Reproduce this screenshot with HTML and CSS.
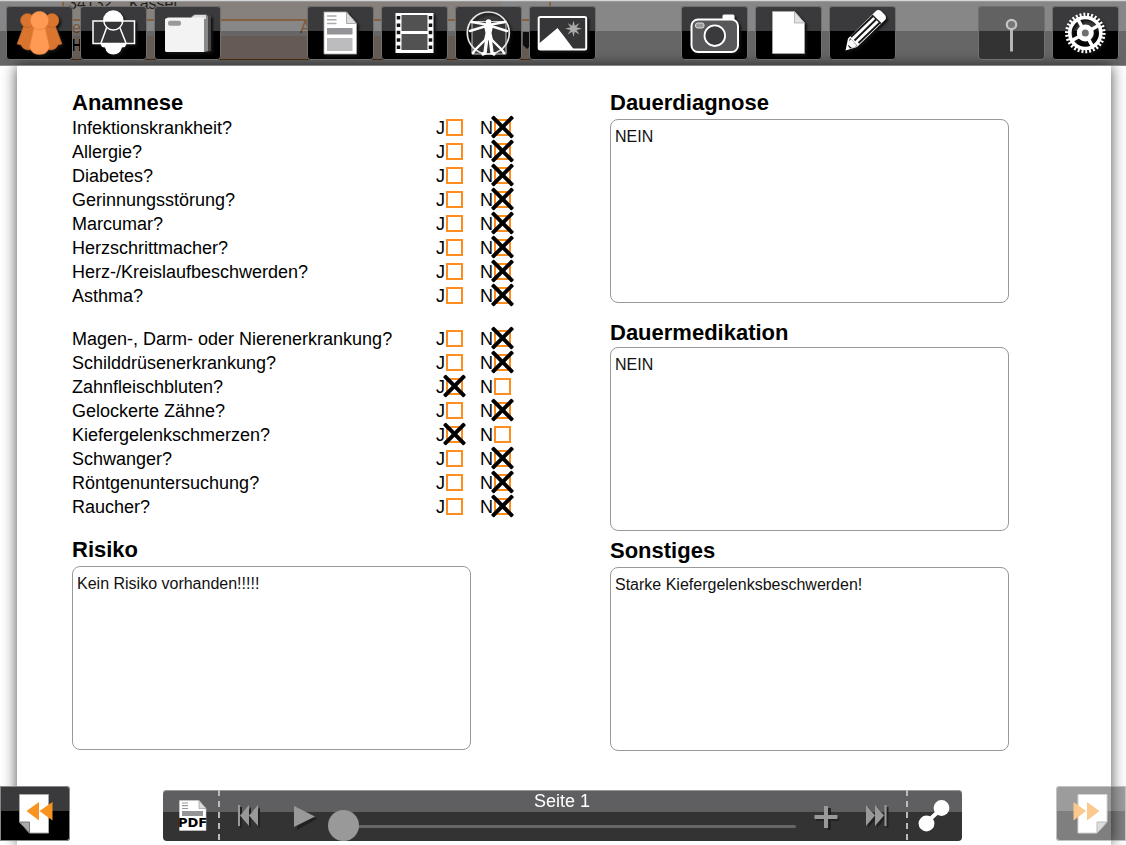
FILE: index.html
```html
<!DOCTYPE html>
<html lang="de">
<head>
<meta charset="utf-8">
<meta name="viewport" content="width=device-width, initial-scale=1">
<title>Anamnese</title>
<link rel="stylesheet" href="styles.css">
</head>
<body>
<div class="app">
  <header class="toolbar">
    <svg class="toolbar-under" width="600" height="66" viewBox="0 0 600 66" aria-hidden="true">
      <path fill="#ffefe4" d="M62 0h439v20H62z"/>
      <path fill="#ffe3d2" d="M62 35h484v24H62z"/>
      <path stroke="#f7a04a" stroke-width="2" fill="none" d="M62 19h488M550 0v20M63 0v20"/>
      <path stroke="#b5651d" stroke-width="1" fill="none" d="M62 58.500h488"/>
      <text x="68" y="8">34132</text>
      <text x="129" y="8">Kassel</text>
      <text x="72" y="32" class="under-orange">e</text>
      <text x="300" y="32" class="under-orange">A</text>
      <text x="71" y="50" class="under-bold">H</text>
      <path fill="#222" d="M523 31h8v13l-4 4-4-4z"/>
    </svg>
    <nav class="group group-first" aria-label="Patient">
      <button class="tool" aria-label="Patienten"><svg viewBox="0 0 67 54">
        <g fill="#d9752f" stroke="#b95f22" stroke-width=".6">
          <path d="M18 19L11 38l4 1q2 5 8 5l8-4V20z"/><path d="M49 19l7 19-4 1q-2 5-8 5l-8-4V20z"/>
          <circle cx="21.500" cy="14.500" r="7"/><circle cx="46" cy="14.500" r="7"/>
        </g>
        <g fill="#ff9a55" stroke="#e07a36" stroke-width=".6">
          <path d="M28 21L23.500 41q2 7.500 10 7.500T43.500 41L39 21z"/><circle cx="33.500" cy="14.500" r="9.200"/>
        </g></svg></button>
      <button class="tool" aria-label="Patientenbild"><svg viewBox="0 0 67 54">
        <circle cx="33.300" cy="14.500" r="9.500" fill="#fff"/>
        <path d="M20 37h27l-2 4-3 .5q-2 7-8.700 7T25 41.500L22 41z" fill="#fff"/>
        <path d="M13 15h41.500v22.500H13z" fill="#353537" stroke="#fff" stroke-width="1.500"/>
        <path d="M26.500 22L21 37M40 22l6 15" stroke="#fff" stroke-width="1.500" fill="none"/>
        <path d="M24 14.500a9.500 9.500 0 0 1 18.600 0z" fill="#fff"/>
        <circle cx="33.300" cy="14.500" r="9.500" fill="none" stroke="#fff" stroke-width="1.500"/></svg></button>
      <button class="tool" aria-label="Ordner"><svg viewBox="0 0 67 54">
        <path d="M40 10l3-2h10l4 2v35l-7 1z" fill="#444"/><path d="M37 11l3-2.500h12l2 2V45l-4 1z" fill="#888"/><path d="M38 11l3-2h11v4H38z" fill="#ddd"/>
        <path d="M11 13l3-1.500h34l2 1V46H12l-1-1z" fill="#f3f3f3"/>
        <rect x="14" y="14.700" width="13" height="5" rx="2" fill="#999"/></svg></button>
    </nav>
    <nav class="group group-media" aria-label="Dokumente">
      <button class="tool" aria-label="Formular"><svg viewBox="0 0 67 54">
        <path d="M17 6h22.500l10 11.500V48H17z" fill="#fff" stroke="#aaa" stroke-width=".8"/>
        <path d="M39.500 6v11.500h10z" fill="#ddd" stroke="#999" stroke-width=".8"/>
        <path d="M20 10h9.500M20 13.700h9.500M20 17.500h9.500" stroke="#aaa" stroke-width="1.500"/>
        <path d="M20 22h25.500v6.500H20z" fill="#939398"/><path d="M20 32h25.500v13H20z" fill="#bcbcbf"/></svg></button>
      <button class="tool" aria-label="Film"><svg viewBox="0 0 67 54">
        <path d="M14.500 7h38v40h-38z" fill="#fff"/>
        <path d="M20.500 9h26v16h-26zM20.500 28h26v16h-26z" fill="#525252"/>
        <path d="M17.500 10v37M49.500 10v37" stroke="#111" stroke-width="3.500" stroke-dasharray="3.500 3.900"/></svg></button>
      <button class="tool" aria-label="Körper"><svg viewBox="0 0 67 54">
        <path d="M17 15.500h34V48H17z" fill="#333" stroke="#ccc"/>
        <circle cx="33.300" cy="27" r="21" fill="none" stroke="#e8e6e0" stroke-width="1.700"/>
        <g stroke="#fff" fill="none" stroke-linecap="round" stroke-width="2.400">
          <path d="M17 16l14 2.500h5L50 16M15 25l16-5h5l16 5"/><path stroke-width="3.400" d="M32 31l-2 16-2 1M35 31l2 16 2 1"/><path d="M31 33L20 44l-2 3M36 33l11 11 2 3"/>
        </g>
        <path d="M28.500 18h10l-2 9 1.500 7h-9l1.500-7z" fill="#fff"/><circle cx="33.500" cy="16" r="2.800" fill="#fff"/></svg></button>
      <button class="tool" aria-label="Bilder"><svg viewBox="0 0 67 54">
        <rect x="9.700" y="11" width="47.500" height="32.500" rx="1.500" fill="#363638" stroke="#fff" stroke-width="2"/>
        <path d="M9.500 38L28.500 22l5.500 7L44.500 43h-35z" fill="#fff"/>
        <path d="M44.500 14.500l1.300 5.200 4.700-2.700-3 4.300 5.500 1.400-5.500 1.300 3 4.500-4.700-2.700-1.300 5.200-1.300-5.200-4.700 2.700 3-4.500-5.500-1.300 5.500-1.400-3-4.300 4.700 2.700z" fill="#aaa"/></svg></button>
    </nav>
    <nav class="group group-create" aria-label="Erfassen">
      <button class="tool" aria-label="Kamera"><svg viewBox="0 0 67 54">
        <rect x="41.500" y="8.500" width="12" height="7" rx="1.500" fill="#fff"/>
        <rect x="10.500" y="13.500" width="46.500" height="32.500" rx="6.500" fill="#58585a" stroke="#fff" stroke-width="2"/>
        <circle cx="33.800" cy="29.700" r="10.300" fill="#3a3a3c" stroke="#fff" stroke-width="1.800"/>
        <rect x="14.500" y="17" width="8.500" height="5" rx="2" fill="#999" stroke="#ddd"/></svg></button>
      <button class="tool" aria-label="Neue Seite"><svg viewBox="0 0 67 54">
        <path d="M17.500 5.500h22l10 11.500v30.500h-32z" fill="#fff" stroke="#aaa" stroke-width=".8"/>
        <path d="M39.500 5.500V17h10z" fill="#e2e2e2" stroke="#aaa" stroke-width=".8"/></svg></button>
      <button class="tool" aria-label="Stift"><svg viewBox="0 0 67 54">
        <path d="M16.500 44.500l2.500-12L47 5q2-2 5 0l4 4q2 3 0 5L28 41z" fill="#fff"/>
        <path d="M19 39.500L21 32l7.500 8-7.500 2.500z" fill="#111"/><path d="M18 38l4-5 6 7-5 2z" fill="#fff"/>
        <path d="M22 31L44 10M25.500 34.500L47.500 13M29.500 37L51 16.500" stroke="#161616" stroke-width="1.800"/>
        <path d="M43 9l9 8.500" stroke="#222" stroke-width="1.500"/></svg></button>
    </nav>
    <nav class="group group-settings" aria-label="Einstellungen">
      <button class="tool tool-muted" aria-label="Nadel"><svg viewBox="0 0 67 54">
        <path d="M33.500 23v22.500" stroke="#b5b5b5" stroke-width="3"/><circle cx="33.500" cy="18.500" r="4.700" fill="#777" stroke="#c4c4c4" stroke-width="2.200"/></svg></button>
      <button class="tool" aria-label="Optionen"><svg viewBox="0 0 67 54">
        <circle cx="33.300" cy="27" r="18" fill="none" stroke="#fff" stroke-width="4.500" pathLength="60" stroke-dasharray="1 1"/>
        <circle cx="33.300" cy="27" r="15.500" fill="none" stroke="#fff" stroke-width="3.600"/>
        <path d="M26 13.500l14.500 27M20 34.500l26.500-15" stroke="#fff" stroke-width="3.500"/>
        <circle cx="33.300" cy="27" r="6" fill="#707070" stroke="#fff" stroke-width="5"/></svg></button>
    </nav>
  </header>

  <main class="sheet">
    <div class="column">
      <section>
        <h2>Anamnese</h2>
        <div class="questions">
          <div class="question"><span>Infektionskrankheit?</span><label>J<input type="checkbox"></label><label>N<input type="checkbox" checked></label></div>
          <div class="question"><span>Allergie?</span><label>J<input type="checkbox"></label><label>N<input type="checkbox" checked></label></div>
          <div class="question"><span>Diabetes?</span><label>J<input type="checkbox"></label><label>N<input type="checkbox" checked></label></div>
          <div class="question"><span>Gerinnungsstörung?</span><label>J<input type="checkbox"></label><label>N<input type="checkbox" checked></label></div>
          <div class="question"><span>Marcumar?</span><label>J<input type="checkbox"></label><label>N<input type="checkbox" checked></label></div>
          <div class="question"><span>Herzschrittmacher?</span><label>J<input type="checkbox"></label><label>N<input type="checkbox" checked></label></div>
          <div class="question"><span>Herz-/Kreislaufbeschwerden?</span><label>J<input type="checkbox"></label><label>N<input type="checkbox" checked></label></div>
          <div class="question"><span>Asthma?</span><label>J<input type="checkbox"></label><label>N<input type="checkbox" checked></label></div>
        </div>
        <div class="questions">
          <div class="question"><span>Magen-, Darm- oder Nierenerkrankung?</span><label>J<input type="checkbox"></label><label>N<input type="checkbox" checked></label></div>
          <div class="question"><span>Schilddrüsenerkrankung?</span><label>J<input type="checkbox"></label><label>N<input type="checkbox" checked></label></div>
          <div class="question"><span>Zahnfleischbluten?</span><label>J<input type="checkbox" checked></label><label>N<input type="checkbox"></label></div>
          <div class="question"><span>Gelockerte Zähne?</span><label>J<input type="checkbox"></label><label>N<input type="checkbox" checked></label></div>
          <div class="question"><span>Kiefergelenkschmerzen?</span><label>J<input type="checkbox" checked></label><label>N<input type="checkbox"></label></div>
          <div class="question"><span>Schwanger?</span><label>J<input type="checkbox"></label><label>N<input type="checkbox" checked></label></div>
          <div class="question"><span>Röntgenuntersuchung?</span><label>J<input type="checkbox"></label><label>N<input type="checkbox" checked></label></div>
          <div class="question"><span>Raucher?</span><label>J<input type="checkbox"></label><label>N<input type="checkbox" checked></label></div>
        </div>
      </section>
      <section class="note note-risk">
        <h2><label for="risiko">Risiko</label></h2>
        <textarea id="risiko">Kein Risiko vorhanden!!!!!</textarea>
      </section>
    </div>
    <div class="column">
      <section class="note">
        <h2><label for="diagnose">Dauerdiagnose</label></h2>
        <textarea id="diagnose">NEIN</textarea>
      </section>
      <section class="note note-medication">
        <h2><label for="medikation">Dauermedikation</label></h2>
        <textarea id="medikation">NEIN</textarea>
      </section>
      <section class="note note-other">
        <h2><label for="sonstiges">Sonstiges</label></h2>
        <textarea id="sonstiges">Starke Kiefergelenksbeschwerden!</textarea>
      </section>
    </div>
  </main>

  <footer class="bottom">
    <button class="turn turn-back" aria-label="Vorherige Seite"><svg viewBox="0 0 70 55">
      <path d="M19.500 8.500h29V47h-19l-10-11z" fill="#fff" stroke="#aaa"/><path d="M19.500 36h10v11z" fill="#aaa" stroke="#777"/>
      <path d="M26.500 25L39 16v18.500zM39.500 25l13-9v18.500z" fill="#f7931e"/></svg></button>
    <div class="player">
      <button class="pdf" aria-label="PDF"><svg viewBox="0 0 57 51">
        <path d="M16.500 10.500H36l7 8v22H16.500z" fill="#fff" stroke="#ccc" stroke-width=".6"/><path d="M36 10.500v8h7z" fill="#ddd" stroke="#999" stroke-width=".7"/>
        <path d="M19 13h6M19 15.700h6M19 18.500h6" stroke="#999" stroke-width="1.200"/><path d="M19 21h21v5H19z" fill="#939398"/>
        <text x="29.500" y="37" text-anchor="middle">PDF</text></svg></button>
      <button class="skip" aria-label="Zum Anfang"><svg viewBox="0 0 57 51">
        <path transform="translate(2 2)" fill="#222" d="M18 15h2v21h-2zM29 15v21L20 25.500zM38 15v21l-9-10.500z"/>
        <path fill="#999" d="M18 15h2v21h-2zM29 15v21L20 25.500zM38 15v21l-9-10.500z"/></svg></button>
      <button class="play" aria-label="Abspielen"><svg viewBox="0 0 51 51">
        <path fill="#222" d="M20 18v22l20-11z"/><path fill="#999" d="M17 16v21l21-10.500z"/></svg></button>
      <div class="timeline">
        <label for="seite">Seite 1</label>
        <input id="seite" type="range" min="1" max="10" value="1">
      </div>
      <button class="add" aria-label="Hinzufügen"><svg viewBox="0 0 58 51">
        <path stroke="#222" stroke-width="4" d="M33 18v22M20 29h23"/><path stroke="#999" stroke-width="4" d="M30 16v22M18.500 27h23"/></svg></button>
      <button class="end" aria-label="Zum Ende"><svg viewBox="0 0 52 51">
        <path transform="translate(2 2)" fill="#222" d="M12 15v21l9-10.500zM21 15v21l9-10.500zM30.500 15h2v21h-2z"/>
        <path fill="#999" d="M12 15v21l9-10.500zM21 15v21l9-10.500zM30.500 15h2v21h-2z"/></svg></button>
      <button class="share" aria-label="Verbinden"><svg viewBox="0 0 56 51">
        <path stroke="#fff" stroke-width="4" d="M20 33l16-15"/><circle cx="35.500" cy="18" r="7.900" fill="#fff"/><circle cx="20.500" cy="33.500" r="7.900" fill="#fff"/></svg></button>
    </div>
    <button class="turn turn-next" aria-label="Nächste Seite"><svg viewBox="0 0 70 55">
      <path d="M22 8.500h29V36l-10 11H22z" fill="#fff" stroke="#aaa"/><path d="M51 36H41v11z" fill="#bbb" stroke="#777"/>
      <path d="M30 25l-12.500-9v18.500zM43.500 25L31 16v18.500z" fill="#f7931e"/></svg></button>
  </footer>
</div>
</body>
</html>
```
FILE: styles.css
```css
* { box-sizing: border-box; }

body {
  margin: 0;
  background: #fff;
  color: #000;
  font-family: "Liberation Sans", Arial, sans-serif;
  font-size: 18px;
}

button {
  display: block;
  padding: 0;
  border: 0;
  background: none;
  cursor: pointer;
}

button svg { display: block; width: 100%; height: 100%; }

.app {
  display: flex;
  flex-direction: column;
  min-height: 100vh;
  overflow: hidden;
}

/* Top toolbar */
.toolbar {
  position: relative;
  z-index: 1;
  display: flex;
  padding: 5px 7px 6px 6px;
  height: 66px;
  border-top: 1px solid #d5d5d5;
}

.toolbar::before {
  content: "";
  position: absolute;
  inset: 0;
  border-top: 1px solid #999;
  border-bottom: 1px solid #888;
  background: linear-gradient(rgba(55, 55, 55, .6) 29px, rgba(0, 0, 0, .6) 29px);
}

.toolbar-under {
  position: absolute;
  top: 0;
  left: 0;
  z-index: -1;
  font-size: 16px;
}

.under-orange { fill: #e8862e; }
.under-bold { font-weight: bold; }

.group { position: relative; display: flex; gap: 7px; }
.group-media { margin-left: 86px; }
.group-create { margin-left: 85px; }
.group-settings { margin-left: auto; }

.tool {
  width: 67px;
  height: 54px;
  border-radius: 4px;
  box-shadow: inset 0 0 0 1px #707070;
  background: linear-gradient(#3a3a3c 25px, #000 25px);
}

.tool svg { filter: drop-shadow(2px 2px 1px #111); }

.tool-muted { background: linear-gradient(#626262 25px, #333 25px); }
.tool-muted svg { filter: none; }

/* Form sheet */
.sheet {
  flex: 1;
  display: grid;
  grid-template-columns: 439fr 399fr;
  column-gap: 99px;
  margin: 0 15px 0 17px;
  padding: 24px 102px 94px 55px;
  background: #fff;
  box-shadow: 0 0 14px rgba(0, 0, 0, .7);
}

h2 {
  margin: 0;
  font-size: 22px;
  line-height: 26px;
}

.questions + .questions { margin-top: 19px; }

.question {
  display: flex;
  align-items: center;
  height: 24px;
  line-height: 24px;
}

.question span { flex: 1; }

.question label { display: flex; align-items: center; }
.question label + label { margin-left: 17px; }

.question input {
  appearance: none;
  position: relative;
  width: 17px;
  height: 17px;
  margin: 0 0 2px 1px;
  border: 2px solid #ff8c1e;
}

.question input:checked::before,
.question input:checked::after {
  content: "";
  position: absolute;
  top: 4px;
  left: -8px;
  width: 29px;
  height: 4px;
  border-radius: 1px;
  background: #000;
  transform: rotate(45deg);
}

.question input:checked::after { transform: rotate(-45deg); }

.note textarea {
  display: block;
  width: 100%;
  height: 184px;
  margin: 3px 0 0;
  padding: 7px 4px;
  border: 1px solid #999;
  border-radius: 8px;
  background: #fff;
  color: #111;
  font: 16px/20px "Liberation Sans", Arial, sans-serif;
  resize: none;
}

.note-risk { width: 91%; margin-top: 18px; }
.note-medication { margin-top: 17px; }
.note-medication textarea { margin-top: 1px; }
.note-other { margin-top: 7px; }

/* Bottom controls float over the sheet */
.bottom {
  position: fixed;
  right: 0;
  bottom: 4px;
  left: 0;
  z-index: 2;
  display: flex;
  align-items: flex-end;
}

.turn {
  width: 70px;
  height: 55px;
  border-radius: 0 4px 4px 0;
  box-shadow: inset 0 0 0 1px #888;
  background: linear-gradient(#3a3a3c 25px, #000 25px);
}

.turn-next { border-radius: 4px 0 0 4px; opacity: .5; }

.player {
  flex: 1;
  display: flex;
  height: 51px;
  margin: 0 94px 0 93px;
  border-radius: 4px;
  box-shadow: inset 0 1px 0 #999;
  background: linear-gradient(#5f5f61 22px, #333 22px);
}

.pdf, .skip { width: 57px; }
.play { width: 51px; }
.add { width: 58px; }
.end { width: 52px; }
.share { width: 56px; }

.pdf {
  background: repeating-linear-gradient(#bbb 0 6px, transparent 6px 11px) right / 2px 100% no-repeat;
  font: bold 13px "DejaVu Sans", sans-serif;
}

.share {
  background: repeating-linear-gradient(#bbb 0 6px, transparent 6px 11px) left / 2px 100% no-repeat;
}

.timeline {
  flex: 1;
  display: flex;
  flex-direction: column;
  color: #fff;
  text-align: center;
}

.timeline label { line-height: 22px; }

.timeline input {
  appearance: none;
  width: 100%;
  height: 29px;
  margin: 0;
  background: none;
}

.timeline input::-webkit-slider-runnable-track {
  height: 3px;
  border-radius: 2px;
  background: #666;
}

.timeline input::-webkit-slider-thumb {
  appearance: none;
  width: 31px;
  height: 31px;
  margin-top: -15px;
  border-radius: 50%;
  background: #999;
}
```
